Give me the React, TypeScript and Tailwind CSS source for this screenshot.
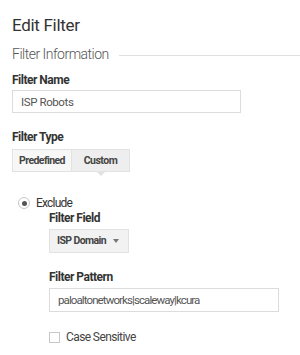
import React from "react";

const App: React.FC = () => {
  return (
    <div className="w-[300px] h-[355px] bg-white overflow-hidden font-['Roboto',sans-serif] text-[#333]">
      <div className="pl-3 pt-[13px]">
        <h1 className="text-[17px] leading-[24px] tracking-[-0.3px] text-[#333]">Edit Filter</h1>

        <div className="flex items-center mt-[8px]">
          <span className="text-[14px] leading-[18px] tracking-[-0.5px] text-[#555] font-light">
            Filter Information
          </span>
          <div className="flex-1 h-px bg-[#e0e0e0] ml-[10px] mt-[3px]" />
        </div>

        <label className="block mt-[10px] text-[12px] leading-[14px] tracking-[-0.5px] font-bold text-[#333]">
          Filter Name
        </label>
        <input
          type="text"
          defaultValue="ISP Robots"
          className="mt-[3px] w-[229px] h-[23px] px-2 border border-[#dcdcdc] text-[11.5px] tracking-[-0.4px] text-[#555] outline-none"
        />

        <label className="block mt-[17px] text-[12px] leading-[14px] tracking-[-0.5px] font-bold text-[#333]">
          Filter Type
        </label>
        <div className="mt-[5px] flex w-[118px] h-[23px] border border-[#e2e2e2] text-[10.5px] font-bold text-[#444] whitespace-nowrap">
          <div className="w-[59px] bg-[#f7f7f7] flex items-center justify-center border-r border-[#e2e2e2] tracking-[-0.6px]">
            Predefined
          </div>
          <div className="relative flex-1 bg-[#eeeeee] flex items-center justify-center tracking-[-0.5px]">
            Custom
            <span className="absolute left-1/2 -translate-x-1/2 top-full w-0 h-0 border-l-[5px] border-r-[5px] border-t-[5px] border-l-transparent border-r-transparent border-t-[#e2e2e2]" />
          </div>
        </div>

        <div className="pl-[6px] mt-[24px]">
          <div className="flex items-center">
            <span className="w-[12px] h-[12px] rounded-full border border-[#c8c8c8] flex items-center justify-center">
              <span className="w-[5px] h-[5px] rounded-full bg-[#555]" />
            </span>
            <span className="ml-[6px] text-[12px] leading-[14px] tracking-[-0.8px] text-[#333]">Exclude</span>
          </div>

          <div className="pl-[31px]">
            <label className="block mt-[1px] text-[12px] leading-[15px] tracking-[-0.5px] font-bold text-[#333]">
              Filter Field
            </label>
            <div className="mt-[3px] w-[80px] h-[24px] bg-[#f2f2f2] border border-[#e2e2e2] flex items-center pl-[7px] text-[10.5px] tracking-[-0.6px] font-bold text-[#444] whitespace-nowrap">
              ISP Domain
              <span className="ml-auto mr-[9px] w-0 h-0 border-l-[3px] border-r-[3px] border-t-[4px] border-l-transparent border-r-transparent border-t-[#777]" />
            </div>

            <label className="block mt-[17px] text-[12px] leading-[14px] tracking-[-0.5px] font-bold text-[#333]">
              Filter Pattern
            </label>
            <input
              type="text"
              defaultValue="paloaltonetworks|scaleway|kcura"
              className="mt-[4px] w-[230px] h-[24px] px-2 border border-[#dcdcdc] text-[11.5px] tracking-[-0.9px] text-[#555] outline-none"
            />

            <div className="flex items-center mt-[18px]">
              <span className="w-[11px] h-[11px] border border-[#c8c8c8]" />
              <span className="ml-[6px] text-[12px] leading-[14px] tracking-[-0.6px] text-[#444]">Case Sensitive</span>
            </div>
          </div>
        </div>
      </div>
    </div>
  );
};

export default App;
